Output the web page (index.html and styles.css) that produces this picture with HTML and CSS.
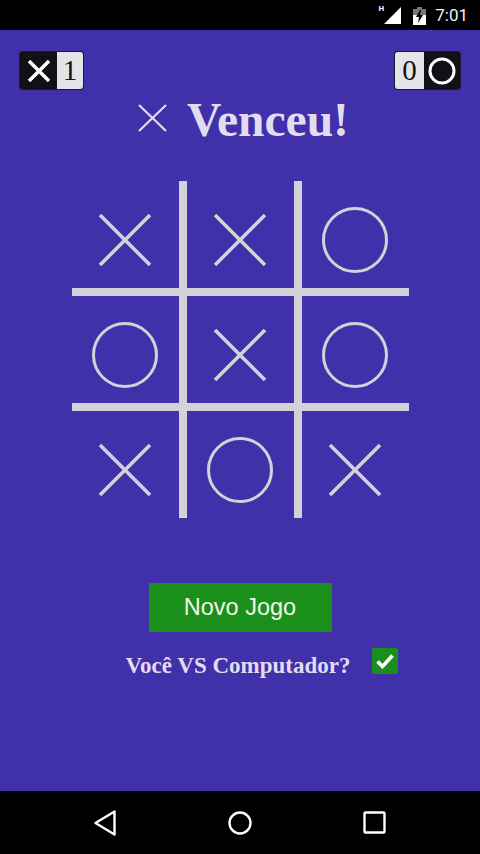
FILE: index.html
```html
<!DOCTYPE html>
<html>
<head>
<meta charset="utf-8">
<link rel="stylesheet" href="styles.css">
</head>
<body>
<div class="statusbar">
  <span class="net">H</span>
  <svg class="signal" width="18" height="18" viewBox="0 0 18 18"><polygon points="0,17 17,0 17,17" fill="#fff"/></svg>
  <svg class="battery" width="13" height="18" viewBox="0 0 13 18">
    <rect x="4" y="0" width="5" height="2" fill="#777"/>
    <rect x="0" y="2" width="13" height="16" fill="#777"/>
    <rect x="0" y="8" width="13" height="10" fill="#fff"/>
    <polygon points="7,3 3,10 6,10 5,16 10,8 7,8 8,3" fill="#000"/>
  </svg>
  <span class="time">7:01</span>
</div>

<div class="main">
  <div class="scores">
    <div class="score">
      <div class="dark"><svg width="24" height="22" viewBox="0 0 24 22"><path d="M2 1 L22 21 M22 1 L2 21" stroke="#fff" stroke-width="3.5" fill="none"/></svg></div>
      <div class="light l-one">1</div>
    </div>
    <div class="score">
      <div class="light l-zero">0</div>
      <div class="dark d-o"><svg width="28" height="28" viewBox="0 0 28 28"><circle cx="14" cy="14" r="12" stroke="#fff" stroke-width="3" fill="none"/></svg></div>
    </div>
  </div>

  <div class="title">
    <svg class="title-x" width="31" height="30" viewBox="0 0 31 30"><path d="M2 2 L29 28 M29 2 L2 28" stroke="#e2dcf0" stroke-width="2.2" fill="none"/></svg>
    <span class="title-text">Venceu!</span>
  </div>

  <div class="board">
    <div class="cell"><svg class="mx" viewBox="0 0 54 54"><path d="M2 2 L52 52 M52 2 L2 52" /></svg></div>
    <div class="cell"><svg class="mx" viewBox="0 0 54 54"><path d="M2 2 L52 52 M52 2 L2 52" /></svg></div>
    <div class="cell"><svg class="mo" viewBox="0 0 66 66"><circle cx="33" cy="33" r="31.5"/></svg></div>
    <div class="cell"><svg class="mo" viewBox="0 0 66 66"><circle cx="33" cy="33" r="31.5"/></svg></div>
    <div class="cell"><svg class="mx" viewBox="0 0 54 54"><path d="M2 2 L52 52 M52 2 L2 52" /></svg></div>
    <div class="cell"><svg class="mo" viewBox="0 0 66 66"><circle cx="33" cy="33" r="31.5"/></svg></div>
    <div class="cell"><svg class="mx" viewBox="0 0 54 54"><path d="M2 2 L52 52 M52 2 L2 52" /></svg></div>
    <div class="cell"><svg class="mo" viewBox="0 0 66 66"><circle cx="33" cy="33" r="31.5"/></svg></div>
    <div class="cell"><svg class="mx" viewBox="0 0 54 54"><path d="M2 2 L52 52 M52 2 L2 52" /></svg></div>
  </div>

  <div class="btn-wrap"><div class="btn">Novo Jogo</div></div>

  <div class="vs-row">
    <span class="vs-text">Você VS Computador?</span>
    <div class="checkbox"><svg width="26" height="26" viewBox="0 0 26 26"><path d="M5.5 13.5 L10.5 18.5 L20.5 7.5" stroke="#fff" stroke-width="3.6" fill="none"/></svg></div>
  </div>
</div>

<div class="navbar">
  <svg width="24" height="26" viewBox="0 0 24 26"><polygon points="21.5,1.5 21.5,24.5 2.5,13" stroke="#fff" stroke-width="2.4" fill="none" stroke-linejoin="round"/></svg>
  <svg width="26" height="26" viewBox="0 0 26 26"><circle cx="13" cy="13" r="10.5" stroke="#fff" stroke-width="2.4" fill="none"/></svg>
  <svg width="24" height="24" viewBox="0 0 24 24"><rect x="1.5" y="1.5" width="20" height="20" rx="1" stroke="#fff" stroke-width="2.4" fill="none"/></svg>
</div>
</body>
</html>
```

FILE: styles.css
```css
html, body {
  margin: 0;
  padding: 0;
}
body {
  width: 480px;
  height: 854px;
  display: flex;
  flex-direction: column;
  background: #000;
  font-family: "Liberation Serif", serif;
  overflow: hidden;
}
.statusbar {
  height: 30px;
  background: #000;
  display: flex;
  align-items: center;
  justify-content: flex-end;
  padding-right: 12px;
  color: #fff;
}
.net {
  font-family: Roboto, sans-serif;
  font-size: 8px;
  font-weight: bold;
  align-self: flex-start;
  margin-top: 4px;
  margin-right: 0;
}
.signal {
  margin-top: 1px;
  margin-right: 11px;
}
.battery {
  margin-top: 1px;
  margin-right: 9px;
}
.time {
  font-family: Roboto, sans-serif;
  font-size: 17px;
  color: #f2f2f2;
}
.main {
  flex: 1;
  background: #4030a9;
  display: flex;
  flex-direction: column;
}
.scores {
  display: flex;
  justify-content: space-between;
  padding: 22px 20px 0 20px;
}
.score {
  display: flex;
  height: 37px;
  border-radius: 3px;
  overflow: hidden;
  box-shadow: 0 0 0 1px #1a1a2a;
}
.dark {
  background: #111115;
  width: 37px;
  display: flex;
  align-items: center;
  justify-content: center;
}
.d-o {
  width: 36px;
}
.light {
  background: #e4e4e6;
  color: #111;
  font-size: 29px;
  display: flex;
  align-items: center;
  justify-content: center;
  line-height: 37px;
}
.l-one {
  width: 26px;
}
.l-zero {
  width: 29px;
}
.title {
  margin-top: 5px;
  height: 52px;
  display: flex;
  align-items: center;
  justify-content: center;
  gap: 19px;
  padding-left: 6px;
}
.title-x {
  margin-top: -4px;
}
.title-text {
  font-weight: bold;
  font-size: 47.5px;
  line-height: 52px;
  color: #e2dcf0;
}
.board {
  margin: 35px auto 0 auto;
  display: grid;
  grid-template-columns: 107px 107px 107px;
  grid-template-rows: 107px 107px 107px;
  gap: 8px;
  background: #d3d2d8;
}
.cell {
  background: #4030a9;
  display: flex;
  align-items: center;
  justify-content: center;
  padding-top: 10px;
}
.mx {
  width: 54px;
  height: 54px;
}
.mx path {
  stroke: #d3d2d8;
  stroke-width: 3.6;
  fill: none;
}
.mo {
  width: 66px;
  height: 66px;
}
.mo circle {
  stroke: #d3d2d8;
  stroke-width: 3;
  fill: none;
}
.btn-wrap {
  display: flex;
  justify-content: center;
  margin-top: 65px;
}
.btn {
  width: 183px;
  height: 49px;
  background: #1a8f1a;
  color: #f4f6ea;
  font-family: "Liberation Sans", Arial, sans-serif;
  font-size: 23.5px;
  display: flex;
  align-items: center;
  justify-content: center;
}
.vs-row {
  margin-top: 16px;
  display: flex;
  align-items: flex-start;
  justify-content: center;
  padding-left: 44px;
  gap: 22px;
}
.vs-text {
  margin-top: 5px;
  font-weight: bold;
  font-size: 23px;
  line-height: 26px;
  color: #e2dcf0;
}
.checkbox {
  width: 26px;
  height: 26px;
  background: #1b8f1b;
  border-radius: 2px;
}
.checkbox svg {
  display: block;
}
.navbar {
  height: 63px;
  background: #000;
  display: flex;
  align-items: center;
  justify-content: center;
  gap: 110px;
}
```
